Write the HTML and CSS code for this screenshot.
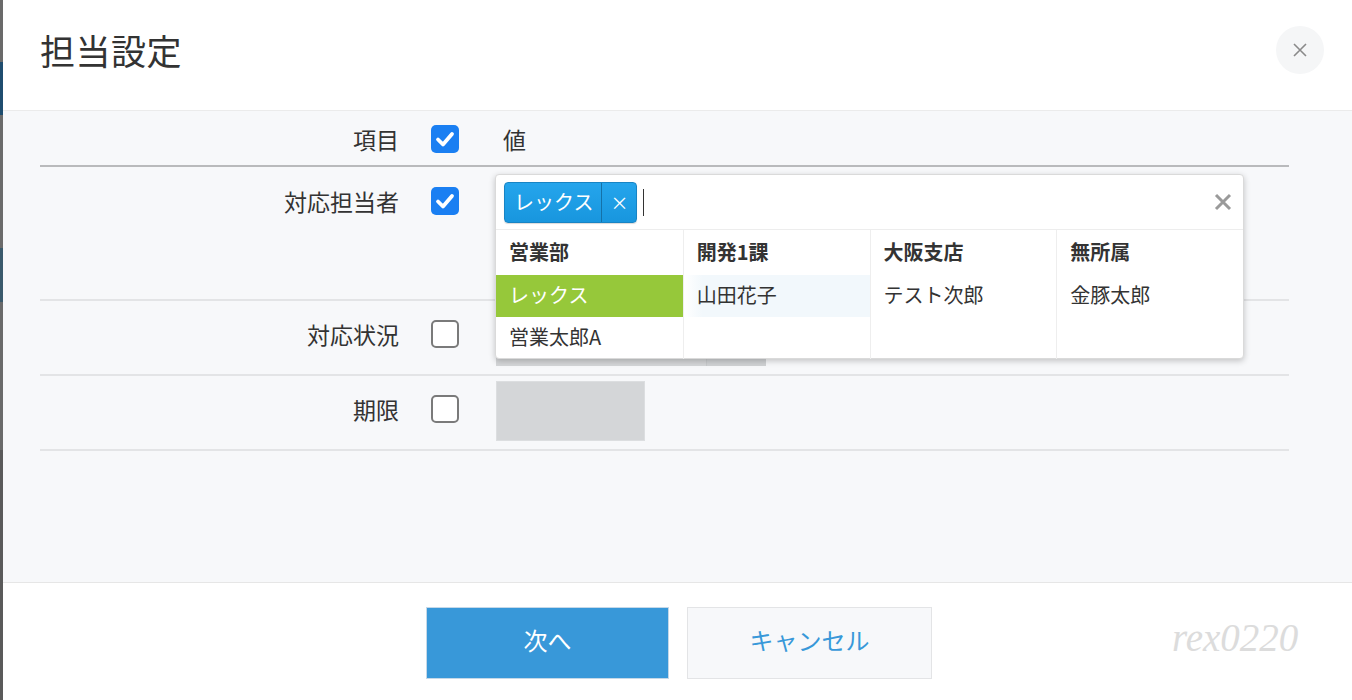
FILE: index.html
```html
<!DOCTYPE html>
<html lang="ja">
<head>
<meta charset="utf-8">
<link rel="stylesheet" href="styles.css">
</head>
<body>
<div class="backdrop"></div>
<div class="modal">
  <header class="modal-header">
    <h1 class="title">担当設定</h1>
    <button class="close-btn" aria-label="close">
      <svg width="16" height="16" viewBox="0 0 16 16"><path d="M2 2L14 14M14 2L2 14" stroke="#8a8a8a" stroke-width="1.6" fill="none"/></svg>
    </button>
  </header>
  <main class="modal-body">
    <div class="table">
      <div class="row row-head">
        <div class="label">項目</div>
        <div class="check checked"><svg viewBox="0 0 28 28"><path d="M7 14.5L12 19.5L21 9" stroke="#fff" stroke-width="3.8" fill="none" stroke-linecap="round" stroke-linejoin="round"/></svg></div>
        <div class="value head-value">値</div>
      </div>
      <div class="row row-assignee">
        <div class="label">対応担当者</div>
        <div class="check checked"><svg viewBox="0 0 28 28"><path d="M7 14.5L12 19.5L21 9" stroke="#fff" stroke-width="3.8" fill="none" stroke-linecap="round" stroke-linejoin="round"/></svg></div>
        <div class="value value-rel">
          <div class="picker">
            <div class="picker-input">
              <span class="tag"><span class="tag-text">レックス</span><span class="tag-x">×</span></span>
              <span class="caret"></span>
              <span class="clear">
                <svg width="20" height="20" viewBox="0 0 20 20"><path d="M3 3L17 17M17 3L3 17" stroke="#9a9a9a" stroke-width="3" fill="none"/></svg>
              </span>
            </div>
            <div class="picker-cols">
              <div class="col">
                <div class="col-head">営業部</div>
                <div class="item selected">レックス</div>
                <div class="item">営業太郎A</div>
              </div>
              <div class="col">
                <div class="col-head">開発1課</div>
                <div class="item hover">山田花子</div>
              </div>
              <div class="col">
                <div class="col-head">大阪支店</div>
                <div class="item">テスト次郎</div>
              </div>
              <div class="col">
                <div class="col-head">無所属</div>
                <div class="item">金豚太郎</div>
              </div>
            </div>
          </div>
        </div>
      </div>
      <div class="row row-status">
        <div class="label">対応状況</div>
        <div class="check"></div>
        <div class="value"><div class="select-box"><span class="select-main"></span><span class="select-arrow"></span></div></div>
      </div>
      <div class="row row-due">
        <div class="label">期限</div>
        <div class="check"></div>
        <div class="value"><div class="date-box"></div></div>
      </div>
    </div>
  </main>
  <footer class="modal-footer">
    <button class="btn btn-primary">次へ</button>
    <button class="btn btn-cancel">キャンセル</button>
    <span class="watermark">rex0220</span>
  </footer>
</div>
</body>
</html>
```

FILE: styles.css
```css
* { box-sizing: border-box; }
html, body { margin: 0; padding: 0; }
body {
  width: 1352px;
  height: 700px;
  overflow: hidden;
  display: flex;
  font-family: "Noto Sans CJK JP", "Noto Sans", sans-serif;
  color: #333;
  background: #5f6163;
}
.backdrop {
  width: 3px;
  flex: none;
  background: linear-gradient(to bottom,
    #6a6a6a 0, #6a6a6a 62px,
    #1f4d6f 62px, #1f4d6f 115px,
    #6b6b6b 115px, #6b6b6b 248px,
    #3a5a6c 248px, #3a5a6c 302px,
    #6a6a6a 302px, #6a6a6a 450px,
    #5a5a5a 450px);
}
.modal {
  flex: 1;
  display: flex;
  flex-direction: column;
  background: #fff;
}
.modal-header {
  height: 111px;
  flex: none;
  display: flex;
  justify-content: space-between;
  align-items: flex-start;
  padding: 26px 28px 0 37px;
  border-bottom: 1px solid #ebebeb;
}
.title {
  margin: 0;
  font-size: 35px;
  line-height: 48px;
  font-weight: 400;
  color: #333;
  letter-spacing: 0.5px;
}
.close-btn {
  width: 48px;
  height: 48px;
  border-radius: 50%;
  border: none;
  background: #f5f6f7;
  display: flex;
  align-items: center;
  justify-content: center;
  padding: 0;
}
.modal-body {
  flex: 1;
  background: #f7f8fa;
  padding: 0 63px 0 37px;
}
.row {
  display: grid;
  grid-template-columns: 359px 60px 1fr;
  align-items: start;
  border-bottom: 2px solid #e3e4e6;
}
.label {
  font-size: 23px;
  line-height: 28px;
  text-align: right;
  color: #333;
}
.check {
  grid-column: 2;
  width: 28px;
  height: 28px;
  margin-left: 32px;
  border-radius: 5px;
  border: 2px solid #7a7a7a;
  background: #fff;
}
.check.checked {
  border: none;
  background: #1a7ff2;
}
.check svg { display: block; width: 28px; height: 28px; }
.value { padding-left: 36px; }
.row-head {
  height: 56px;
  border-bottom: 2px solid #b9babc;
  padding-top: 14px;
}
.head-value {
  padding-left: 44px;
  font-size: 23px;
  line-height: 28px;
}
.row-assignee {
  height: 134px;
  padding-top: 20px;
}
.value-rel { position: relative; }
.row-status {
  height: 75px;
  padding-top: 19px;
}
.row-status .value { margin-top: -14px; }
.row-due {
  height: 75px;
  padding-top: 19px;
}
.row-due .value { margin-top: -14px; }
.select-box {
  width: 270px;
  height: 60px;
  display: flex;
  background: #d4d6d8;
  margin-left: 1px;
}
.select-main { flex: 1; }
.select-arrow { width: 60px; border-left: 1px solid #c8cacc; background: #d0d2d4; }
.date-box {
  width: 149px;
  height: 60px;
  margin-left: 1px;
  background: #d4d6d8;
  border: 1px solid #dcdee0;
}
.picker {
  position: absolute;
  left: 36px;
  top: -13px;
  width: 749px;
  height: 185px;
  background: #fff;
  border: 1px solid #dadada;
  border-radius: 4px;
  box-shadow: 0 2px 6px rgba(0,0,0,0.22);
  z-index: 5;
  display: flex;
  flex-direction: column;
}
.picker-input {
  height: 55px;
  flex: none;
  display: flex;
  align-items: center;
  padding: 0 9px 0 8px;
  border-bottom: 1px solid #ededed;
}
.tag {
  display: flex;
  align-items: stretch;
  height: 41px;
  background: linear-gradient(#25a5ec, #1896de);
  border: 1px solid #1884c4;
  border-radius: 4px;
  color: #fff;
  font-size: 20px;
  box-shadow: 0 1px 1px rgba(0,0,0,0.15);
}
.tag-text {
  padding: 0 8px 0 9px;
  line-height: 38px;
  border-right: 1px solid #1471a8;
}
.tag-x {
  width: 34px;
  text-align: center;
  font-size: 18px;
  line-height: 38px;
}
.caret {
  width: 1px;
  height: 27px;
  background: #333;
  margin-left: 6px;
}
.clear {
  margin-left: auto;
  width: 20px;
  height: 20px;
  display: block;
  margin-right: 1px;
}
.clear svg { display: block; }
.picker-cols {
  flex: 1;
  display: grid;
  grid-template-columns: repeat(4, 1fr);
}
.col { border-left: 1px solid #eeeeee; }
.col:first-child { border-left: none; }
.col-head {
  height: 45px;
  line-height: 44px;
  font-weight: 700;
  font-size: 20px;
  padding-left: 13px;
  color: #333;
}
.item {
  height: 42px;
  line-height: 40px;
  font-size: 20px;
  padding-left: 13px;
  color: #333;
}
.item.selected {
  background: #96c83a;
  color: #fff;
}
.item.hover {
  background: linear-gradient(to right, #ffffff 0, #f2f8fc 10%, #f2f8fc 100%);
}
.modal-footer {
  height: 118px;
  flex: none;
  border-top: 1px solid #e6e6e6;
  display: flex;
  align-items: flex-start;
  padding: 24px 0 0 423px;
  position: relative;
}
.btn {
  height: 72px;
  font-family: inherit;
  font-size: 24px;
  line-height: 30px;
  padding: 0 0 6px;
  cursor: pointer;
}
.btn-primary {
  width: 243px;
  background: #3898d9;
  color: #fff;
  border: 1px solid #c5d8e8;
}
.btn-cancel {
  width: 245px;
  margin-left: 18px;
  background: #f7f8fa;
  color: #3898d9;
  border: 1px solid #e3e4e6;
}
.watermark {
  position: absolute;
  left: 1169px;
  top: 32px;
  font-family: "Liberation Serif", serif;
  font-style: italic;
  font-size: 39px;
  color: #dcdcdc;
}
```
